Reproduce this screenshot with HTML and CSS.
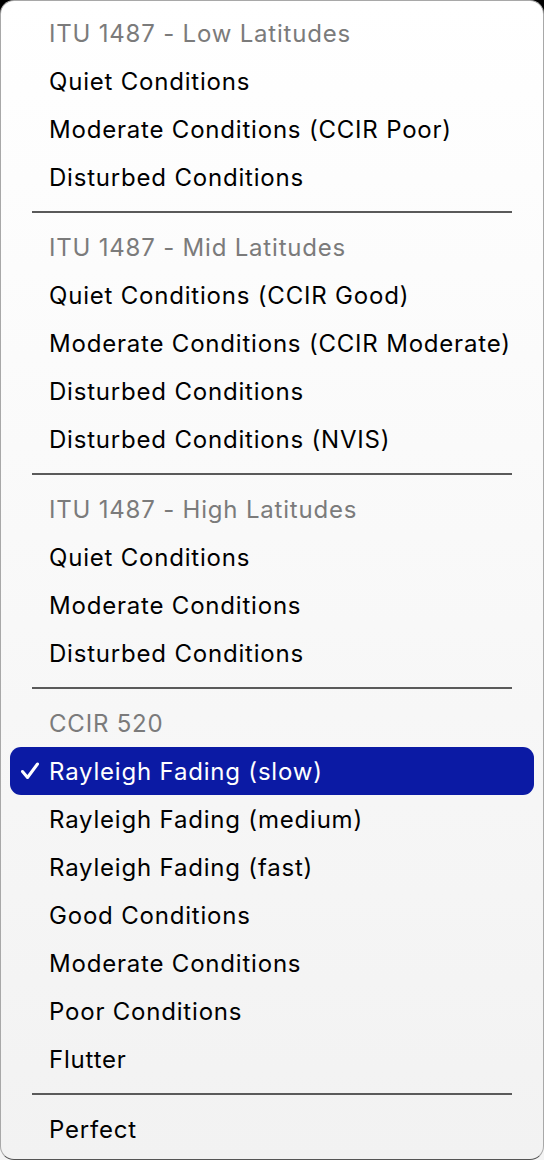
FILE: index.html
```html
<!DOCTYPE html>
<html>
<head>
<meta charset="utf-8">
<link rel="stylesheet" href="styles.css">
</head>
<body>
<div class="menu">
  <div class="header">ITU 1487 - Low Latitudes</div>
  <div class="item">Quiet Conditions</div>
  <div class="item">Moderate Conditions (CCIR Poor)</div>
  <div class="item">Disturbed Conditions</div>
  <div class="sep"></div>
  <div class="header">ITU 1487 - Mid Latitudes</div>
  <div class="item">Quiet Conditions (CCIR Good)</div>
  <div class="item">Moderate Conditions (CCIR Moderate)</div>
  <div class="item">Disturbed Conditions</div>
  <div class="item">Disturbed Conditions (NVIS)</div>
  <div class="sep"></div>
  <div class="header">ITU 1487 - High Latitudes</div>
  <div class="item">Quiet Conditions</div>
  <div class="item">Moderate Conditions</div>
  <div class="item">Disturbed Conditions</div>
  <div class="sep"></div>
  <div class="header">CCIR 520</div>
  <div class="item selected"><svg class="check" width="20" height="18" viewBox="0 0 20 18"><path d="M2.5 9.5 L7.5 15.5 L17.5 2" fill="none" stroke="#fff" stroke-width="3" stroke-linecap="round" stroke-linejoin="round"/></svg>Rayleigh Fading (slow)</div>
  <div class="item">Rayleigh Fading (medium)</div>
  <div class="item">Rayleigh Fading (fast)</div>
  <div class="item">Good Conditions</div>
  <div class="item">Moderate Conditions</div>
  <div class="item">Poor Conditions</div>
  <div class="item">Flutter</div>
  <div class="sep"></div>
  <div class="item">Perfect</div>
</div>
</body>
</html>
```
FILE: styles.css
```css
html, body {
  margin: 0;
  padding: 0;
  width: 544px;
  height: 1160px;
  overflow: hidden;
}
body {
  background: linear-gradient(to bottom, #000 0, #000 50%, #f4f4f4 50%, #f4f4f4 100%);
  font-family: Inter, "Noto Sans", sans-serif;
}
.menu {
  box-sizing: border-box;
  width: 544px;
  height: 1160px;
  border: 1px solid #a8a8a8;
  border-bottom-color: #555;
  border-radius: 14px;
  background: linear-gradient(to bottom, #ffffff 0%, #f2f2f2 100%);
  padding: 8px 9px 0 9px;
  display: flex;
  flex-direction: column;
}
.header, .item {
  box-sizing: border-box;
  height: 48px;
  line-height: 48px;
  padding-top: 1px;
  font-size: 24px;
  padding-left: 39px;
  white-space: nowrap;
  letter-spacing: 0.8px;
  flex-shrink: 0;
}
.header {
  color: #7b7b7b;
}
.item {
  color: #000;
}
.item.selected {
  background: #0b1aa4;
  color: #fff;
  border-radius: 11px;
  position: relative;
}
.check {
  position: absolute;
  left: 10px;
  top: 15px;
}
.sep {
  height: 22px;
  display: flex;
  align-items: center;
  padding: 0 22px 0 22px;
  flex-shrink: 0;
}
.sep::before {
  content: "";
  display: block;
  flex: 1;
  height: 2px;
  background: #5a5a5a;
}
```
